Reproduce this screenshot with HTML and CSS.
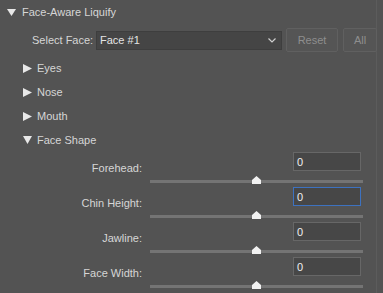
FILE: index.html
```html
<!DOCTYPE html>
<html>
<head>
<meta charset="utf-8">
<link rel="stylesheet" href="styles.css">
</head>
<body>
<div class="panel">
  <div class="header">
    <svg class="tri-down" width="9" height="7" viewBox="0 0 9 7"><polygon points="0,0 9,0 4.5,7" fill="#e8e8e8"/></svg>
    <span>Face-Aware Liquify</span>
  </div>
  <div class="select-row">
    <span class="sel-label">Select Face:</span>
    <div class="dropdown">
      <span>Face #1</span>
      <svg class="chev" width="8" height="5" viewBox="0 0 8 5"><polyline points="0.5,0.5 4,4 7.5,0.5" fill="none" stroke="#cfcfcf" stroke-width="1.2"/></svg>
    </div>
    <div class="btn reset">Reset</div>
    <div class="btn all">All</div>
  </div>
  <div class="section first"><svg class="tri-right" width="9" height="9" viewBox="0 0 9 9"><polygon points="0,0 9,4.5 0,9" fill="#e8e8e8"/></svg><span>Eyes</span></div>
  <div class="section"><svg class="tri-right" width="9" height="9" viewBox="0 0 9 9"><polygon points="0,0 9,4.5 0,9" fill="#e8e8e8"/></svg><span>Nose</span></div>
  <div class="section"><svg class="tri-right" width="9" height="9" viewBox="0 0 9 9"><polygon points="0,0 9,4.5 0,9" fill="#e8e8e8"/></svg><span>Mouth</span></div>
  <div class="section"><svg class="tri-down2" width="9" height="8" viewBox="0 0 9 8"><polygon points="0,0 9,0 4.5,8" fill="#e8e8e8"/></svg><span>Face Shape</span></div>

  <div class="slider-block">
    <div class="s-label">Forehead:</div>
    <div class="s-input"><span>0</span></div>
    <div class="track"><svg class="thumb" width="9" height="8" viewBox="0 0 9 8"><polygon points="4.5,0 9,4 9,8 0,8 0,4" fill="#f2f2f2"/></svg></div>
  </div>
  <div class="slider-block">
    <div class="s-label">Chin Height:</div>
    <div class="s-input focus"><span>0</span></div>
    <div class="track"><svg class="thumb" width="9" height="8" viewBox="0 0 9 8"><polygon points="4.5,0 9,4 9,8 0,8 0,4" fill="#f2f2f2"/></svg></div>
  </div>
  <div class="slider-block">
    <div class="s-label">Jawline:</div>
    <div class="s-input"><span>0</span></div>
    <div class="track"><svg class="thumb" width="9" height="8" viewBox="0 0 9 8"><polygon points="4.5,0 9,4 9,8 0,8 0,4" fill="#f2f2f2"/></svg></div>
  </div>
  <div class="slider-block">
    <div class="s-label">Face Width:</div>
    <div class="s-input"><span>0</span></div>
    <div class="track"><svg class="thumb" width="9" height="8" viewBox="0 0 9 8"><polygon points="4.5,0 9,4 9,8 0,8 0,4" fill="#f2f2f2"/></svg></div>
  </div>
</div>
</body>
</html>
```

FILE: styles.css
```css
html, body {
  margin: 0;
  padding: 0;
}
body {
  background: #535353;
  width: 383px;
  height: 293px;
  overflow: hidden;
  font-family: "Liberation Sans", Arial, sans-serif;
  font-size: 11px;
  color: #d6d6d6;
}
.panel {
  width: 376px;
  height: 293px;
  border-right: 1px solid #5c5c5c;
  display: flex;
  flex-direction: column;
}
.header {
  height: 24px;
  display: flex;
  align-items: center;
  padding-left: 7px;
  gap: 6px;
  flex: none;
}
.select-row {
  margin-top: 4px;
  height: 24px;
  display: flex;
  align-items: center;
  flex: none;
}
.sel-label {
  flex: none;
  box-sizing: border-box;
  width: 96px;
  padding-left: 32px;
  white-space: nowrap;
}
.dropdown {
  flex: none;
  box-sizing: border-box;
  width: 186px;
  height: 19px;
  background: #454545;
  border: 1px solid #3e3e3e;
  display: flex;
  align-items: center;
  justify-content: space-between;
  padding-left: 3px;
  padding-right: 5px;
  color: #e4e4e4;
}
.btn {
  flex: none;
  box-sizing: border-box;
  height: 24px;
  border: 1px solid #606060;
  border-radius: 2px;
  display: flex;
  align-items: center;
  justify-content: center;
  color: #8e8e8e;
  background: #555555;
}
.reset {
  margin-left: 4px;
  width: 52px;
}
.all {
  margin-left: 5px;
  width: 34px;
}
.section {
  height: 24px;
  display: flex;
  align-items: center;
  padding-left: 23px;
  gap: 5px;
  flex: none;
}
.section.first { margin-top: 4px; }
.slider-block {
  height: 35px;
  display: grid;
  grid-template-columns: 150px 213px;
  grid-template-rows: 19px 16px;
  flex: none;
}
.s-label {
  grid-column: 1;
  grid-row: 1 / span 2;
  text-align: right;
  padding-right: 8px;
  padding-top: 10px;
}
.s-input {
  grid-column: 2;
  grid-row: 1;
  justify-self: end;
  margin-right: 2px;
  box-sizing: border-box;
  width: 68px;
  height: 19px;
  background: #474747;
  border: 1px solid #676767;
  display: flex;
  align-items: center;
  color: #f0f0f0;
}
.s-input span { padding-left: 3px; }
.s-input.focus {
  border-color: #3d72c0;
}
.track {
  grid-column: 2;
  grid-row: 2;
  position: relative;
  margin-top: 9px;
  height: 3px;
  background: #747474;
}
.thumb {
  position: absolute;
  left: 102px;
  top: -4px;
}
```
